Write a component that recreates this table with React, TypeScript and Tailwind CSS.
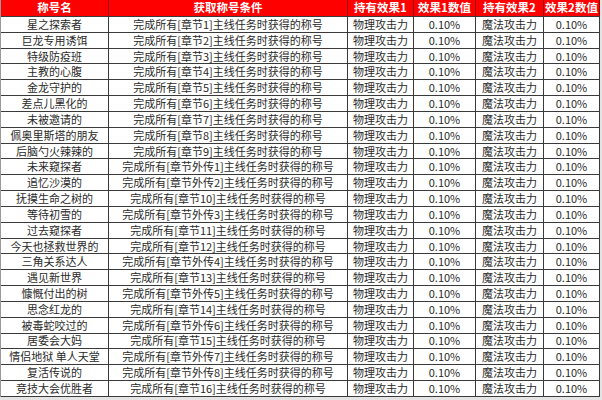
import React from 'react';

type Row = { name: string; chapter: string };

const ROWS: Row[] = [
  { name: '星之探索者', chapter: '章节1' },
  { name: '巨龙专用诱饵', chapter: '章节2' },
  { name: '特级防疫班', chapter: '章节3' },
  { name: '主教的心腹', chapter: '章节4' },
  { name: '金龙守护的', chapter: '章节5' },
  { name: '差点儿黑化的', chapter: '章节6' },
  { name: '未被邀请的', chapter: '章节7' },
  { name: '佩奥里斯塔的朋友', chapter: '章节8' },
  { name: '后脑勺火辣辣的', chapter: '章节9' },
  { name: '未来窥探者', chapter: '章节外传1' },
  { name: '追忆沙漠的', chapter: '章节外传2' },
  { name: '抚摸生命之树的', chapter: '章节10' },
  { name: '等待初雪的', chapter: '章节外传3' },
  { name: '过去窥探者', chapter: '章节11' },
  { name: '今天也拯救世界的', chapter: '章节12' },
  { name: '三角关系达人', chapter: '章节外传4' },
  { name: '遇见新世界', chapter: '章节13' },
  { name: '慷慨付出的树', chapter: '章节外传5' },
  { name: '思念红龙的', chapter: '章节14' },
  { name: '被毒蛇咬过的', chapter: '章节外传6' },
  { name: '居委会大妈', chapter: '章节15' },
  { name: '情侣地狱 单人天堂', chapter: '章节外传7' },
  { name: '复活传说的', chapter: '章节外传8' },
  { name: '竞技大会优胜者', chapter: '章节16' },
];

const HEADERS = ['称号名', '获取称号条件', '持有效果1', '效果1数值', '持有效果2', '效果2数值'];

const cols = 'grid grid-cols-[108px_239px_66px_62px_68px_56px]';
const cell = 'flex items-center justify-center whitespace-nowrap overflow-hidden border-r border-b border-[#3a3a3a]';

const App: React.FC = () => {
  return (
    <div
      className="w-[602px] h-[400px] bg-[#e4e4e4] overflow-hidden text-[#2a2a2a] text-[11px] leading-none"
      style={{ fontFamily: '"Noto Sans CJK SC", "Noto Sans", sans-serif' }}
    >
      <div className="w-[599px] bg-white border-l border-[#9a9a9a]">
        {/* Header */}
        <div className={`${cols} h-[17px] bg-[#ff0000]`}>
          {HEADERS.map(h => (
            <div
              key={h}
              className="flex items-center justify-center whitespace-nowrap border-r border-b border-r-[#a00000] border-b-[#3a3a3a] text-white font-bold text-[11.5px]"
            >
              {h}
            </div>
          ))}
        </div>

        {/* Body */}
        <div className={`${cols} grid-rows-[repeat(24,15.83px)]`}>
          {ROWS.map(r => (
            <React.Fragment key={r.name}>
              <div className={cell}>{r.name}</div>
              <div className={cell}>完成所有[{r.chapter}]主线任务时获得的称号</div>
              <div className={cell}>物理攻击力</div>
              <div className={cell}>0.10%</div>
              <div className={cell}>魔法攻击力</div>
              <div className={cell}>0.10%</div>
            </React.Fragment>
          ))}
        </div>
      </div>
    </div>
  );
};

export default App;
